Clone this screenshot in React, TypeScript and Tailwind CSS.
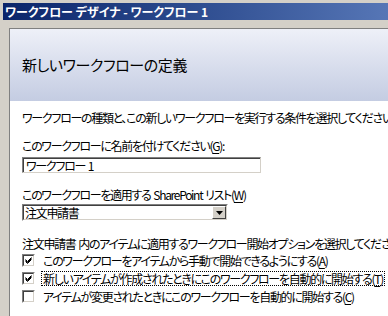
const font = '[font-family:"Noto_Sans_CJK_JP","Noto_Sans",sans-serif] [font-feature-settings:"palt"]'

function Key({ k }: { k: string }) {
  return (
    <>
      (<span className="underline underline-offset-2">{k}</span>)
    </>
  )
}

function Check({ checked }: { checked: boolean }) {
  return (
    <div className="w-[13px] h-[13px] shrink-0 border-t border-l border-[#808080] border-r border-b border-r-white border-b-white">
      <div className="w-full h-full border-t border-l border-[#404040] border-r border-b border-r-[#d4d0c8] border-b-[#d4d0c8] bg-white">
        {checked && (
          <svg width="9" height="9" viewBox="0 0 9 9" className="block">
            <path d="M1.5 3.5 L3.5 5.5 L7.5 1.5 M1.5 4.5 L3.5 6.5 L7.5 2.5 M1.5 5.5 L3.5 7.5 L7.5 3.5" stroke="#000" strokeWidth="1" fill="none" />
          </svg>
        )}
      </div>
    </div>
  )
}

export default function App() {
  const options = [
    { text: 'このワークフローをアイテムから手動で開始できるようにする', key: 'A', checked: true, focus: false },
    { text: '新しいアイテムが作成されたときにこのワークフローを自動的に開始する', key: 'T', checked: true, focus: true },
    { text: 'アイテムが変更されたときにこのワークフローを自動的に開始する', key: 'C', checked: false, focus: false },
  ]

  return (
    <div className={`w-[388px] h-[316px] overflow-hidden bg-[#d4d0c8] pt-[3px] pl-[3px] flex flex-col text-black ${font}`}>
      {/* Title bar */}
      <div className="h-[17px] shrink-0 bg-gradient-to-r from-[#0a246a] to-[#5676b6] text-white font-bold text-[12px] leading-[17px] pl-[2px] whitespace-nowrap">
        ワークフロー デザイナ - ワークフロー 1
      </div>

      {/* Content panel */}
      <div className="mt-[8px] ml-[6px] flex-1 border-t border-l border-[#808080] bg-white flex flex-col">
        <div className="h-[72px] shrink-0 bg-gradient-to-b from-[#eef0f8] to-[#c4cce2] pl-[12px] flex items-center text-[15px] tracking-[-0.4px] whitespace-nowrap">
          新しいワークフローの定義
        </div>

        <div className="pl-[12px] pt-[10px] text-[12px] leading-[14px] tracking-[-1.3px] whitespace-nowrap">
          <div>ワークフローの種類と、この新しいワークフローを実行する条件を選択してください。</div>

          <div className="mt-[14px]">
            このワークフローに名前を付けてください<Key k="G" />:
          </div>
          <div className="mt-[4px] w-[239px] h-[16px] border-t border-l border-[#808080] border-r border-b border-r-[#d4d0c8] border-b-[#d4d0c8]">
            <div className="h-full border-t border-l border-[#404040] pl-[2px] leading-[13px]">ワークフロー&nbsp; 1</div>
          </div>

          <div className="mt-[15px]">
            このワークフローを適用する&nbsp; SharePoint&nbsp; リスト<Key k="W" />
          </div>
          <div className="mt-[2px] w-[206px] h-[17px] border-t border-l border-[#808080] border-r border-b border-r-white border-b-white">
            <div className="h-full flex border-t border-l border-[#404040] border-r border-b border-r-[#d4d0c8] border-b-[#d4d0c8] bg-white">
              <div className="flex-1 pl-[1px] leading-[14px]">注文申請書</div>
              <div className="w-[14px] h-full bg-[#d4d0c8] border-t border-l border-white border-r border-b border-r-[#404040] border-b-[#404040] flex items-center justify-center">
                <svg width="7" height="4" viewBox="0 0 7 4">
                  <path d="M0 0 H7 L3.5 4 Z" fill="#000" />
                </svg>
              </div>
            </div>
          </div>

          <div className="mt-[16px]">注文申請書&nbsp; 内のアイテムに適用するワークフロー開始オプションを選択してください:</div>
          <div className="flex flex-col">
            {options.map((o) => (
              <div key={o.key} className="h-[18px] flex items-center">
                <Check checked={o.checked} />
                <span
                  className={`ml-[6px] px-[1px] leading-[13px] ${
                    o.focus ? 'border border-dotted border-black' : 'border border-transparent'
                  }`}
                >
                  {o.text}
                  <Key k={o.key} />
                </span>
              </div>
            ))}
          </div>
        </div>
      </div>
    </div>
  )
}
